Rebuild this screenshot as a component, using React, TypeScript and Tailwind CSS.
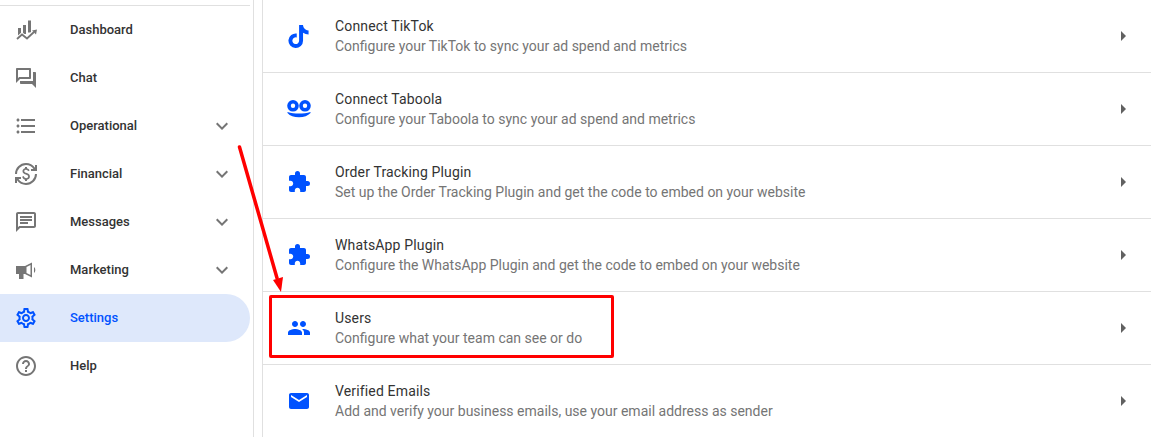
import React from 'react';
import { FaTiktok } from 'react-icons/fa';
import {
  MdArrowRight,
  MdCurrencyExchange,
  MdEmail,
  MdExtension,
  MdFormatListBulleted,
  MdHelpOutline,
  MdKeyboardArrowDown,
  MdOutlineChat,
  MdOutlineQuestionAnswer,
  MdOutlineSettings,
  MdPeople,
} from 'react-icons/md';

const DashboardIcon = () => (
  <svg viewBox="0 0 24 24" className="h-6 w-6" fill="#757575">
    <rect x="4" y="10" width="3" height="8.5" />
    <rect x="9" y="7" width="3" height="9" />
    <rect x="14" y="2.5" width="3" height="12" />
    <path d="M3 21l5-4.5 5 4 7-6.5" fill="none" stroke="#ffffff" strokeWidth="4" />
    <path d="M3 21l5-4.5 5 4 7-6.5" fill="none" stroke="#757575" strokeWidth="1.8" />
    <path d="M23 11.5l-1 5-4-4z" />
  </svg>
);

const MarketingIcon = () => (
  <svg viewBox="0 0 24 24" className="h-6 w-6" fill="#757575">
    <path
      fillRule="evenodd"
      d="M2 8h9l7-3.500v15L11 16H9.500v5H5v-5H2zM12.500 9v6l4 2V7z"
    />
    <path d="M20 9c1.800 1.400 1.800 4.600 0 6z" />
  </svg>
);

const TaboolaIcon = () => (
  <svg viewBox="0 0 24 24" className="h-6 w-6" fill="none">
    <circle cx="6" cy="8.800" r="4" stroke="#0052ff" strokeWidth="3.600" />
    <circle cx="18" cy="8.800" r="4" stroke="#0052ff" strokeWidth="3.600" />
    <path d="M.5 15c7 2 16 2 23 0v1c-2.500 2.800-6.500 4.300-11.500 4.300S3 19 .5 16z" fill="#0052ff" />
  </svg>
);

const navItems = [
  { label: 'Dashboard', icon: <DashboardIcon /> },
  { label: 'Chat', icon: <MdOutlineQuestionAnswer size={24} /> },
  { label: 'Operational', icon: <MdFormatListBulleted size={24} />, expand: true },
  { label: 'Financial', icon: <MdCurrencyExchange size={24} />, expand: true },
  { label: 'Messages', icon: <MdOutlineChat size={24} />, expand: true },
  { label: 'Marketing', icon: <MarketingIcon />, expand: true },
  { label: 'Settings', icon: <MdOutlineSettings size={24} />, active: true },
  { label: 'Help', icon: <MdHelpOutline size={24} /> },
];

const rows = [
  { title: 'Connect TikTok', text: 'Configure your TikTok to sync your ad spend and metrics', icon: <FaTiktok size={23} /> },
  { title: 'Connect Taboola', text: 'Configure your Taboola to sync your ad spend and metrics', icon: <TaboolaIcon /> },
  { title: 'Order Tracking Plugin', text: 'Set up the Order Tracking Plugin and get the code to embed on your website', icon: <MdExtension size={24} /> },
  { title: 'WhatsApp Plugin', text: 'Configure the WhatsApp Plugin and get the code to embed on your website', icon: <MdExtension size={24} /> },
  { title: 'Users', text: 'Configure what your team can see or do', icon: <MdPeople size={24} /> },
  { title: 'Verified Emails', text: 'Add and verify your business emails, use your email address as sender', icon: <MdEmail size={24} /> },
];

const App = () => {
  return (
    <div className="relative flex h-[437px] w-[1151px] overflow-hidden bg-white font-['Roboto',sans-serif]">
      {/* sidebar */}
      <div className="w-[254px] shrink-0 border-r border-[#e0e0e0] pr-[3px] pt-[5px]">
        <div className="h-px bg-[#e0e0e0]" />
        {navItems.map((item) => (
          <div
            key={item.label}
            className={`flex h-12 items-center rounded-r-3xl pl-[14px] pr-4 ${
              item.active ? 'bg-[#dee8fb] text-[#0052ff]' : 'text-[#757575]'
            }`}
          >
            <span className="flex w-[56px] shrink-0">{item.icon}</span>
            <span className={`flex-1 text-[13px] font-medium ${item.active ? 'text-[#0052ff]' : 'text-[#333333]'}`}>
              {item.label}
            </span>
            {item.expand && <MdKeyboardArrowDown size={24} className="text-[#757575]" />}
          </div>
        ))}
      </div>

      {/* settings list */}
      <div className="ml-2 flex-1 border-l border-[#e0e0e0]">
        {rows.map((row) => (
          <div key={row.title} className="flex h-[73px] items-center border-b border-[#e0e0e0] pl-6 pr-4 last:border-b-transparent">
            <span className="flex w-12 shrink-0 text-[#0052ff]">{row.icon}</span>
            <div className="flex-1">
              <div className="text-[14px] leading-5 tracking-[0.15px] text-[#333333]">{row.title}</div>
              <div className="text-[14px] leading-5 text-[#757575]">{row.text}</div>
            </div>
            <MdArrowRight size={24} className="text-[#616161]" />
          </div>
        ))}
      </div>

      {/* annotation */}
      <div className="absolute left-[269px] top-[295px] h-[63px] w-[345px] rounded-[2px] border-[3px] border-[#ff0000]" />
      <svg className="absolute left-[230px] top-[140px]" width="60" height="160" viewBox="0 0 60 160">
        <path d="M9.500 7L47 138" stroke="#ff0000" strokeWidth="3.500" strokeLinecap="round" />
        <path d="M51 152L43 140L53 137z" fill="#ff0000" />
      </svg>
    </div>
  );
};

export default App;
